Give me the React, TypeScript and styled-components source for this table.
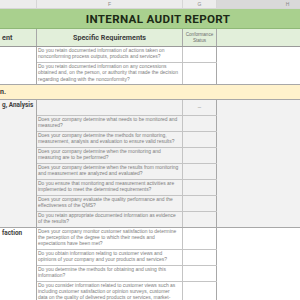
import React from "react";
import styled, { createGlobalStyle } from "styled-components";

type Tone = "white" | "grey" | "yellow";

type Question = {
	text: string;
	status?: string;
};

type SheetSection = {
	title: string;
	tone: Tone;
	questions: Question[];
};

const TONES: Record<Tone, string> = {
	white: "#ffffff",
	grey: "#f2f2f2",
	yellow: "#fff2cc",
};

const COLS = "37px 146px 34px 142px";

const GlobalStyle = createGlobalStyle`
	html, body {
		margin: 0;
		padding: 0;
		background: #ffffff;
		overflow: hidden;
	}
	body {
		width: 300px;
		height: 300px;
	}
`;

// Sections as they show in the scrolled sheet window
const topSection: SheetSection = {
	title: "",
	tone: "white",
	questions: [
		{
			text: "Do you retain documented information of actions taken on nonconforming process outputs, products and services?",
		},
		{
			text: "Do you retain documented information on any concessions obtained and, on the person, or authority that made the decision regarding dealing with the nonconformity?",
		},
	],
};

const monitoringSection: SheetSection = {
	title: "g, Analysis",
	tone: "grey",
	questions: [
		{ text: "", status: "–" },
		{ text: "Does your company determine what needs to be monitored and measured?" },
		{
			text: "Does your company determine the methods for monitoring, measurement, analysis and evaluation to ensure valid results?",
		},
		{ text: "Does your company determine when the monitoring and measuring are to be performed?" },
		{
			text: "Does your company determine when the results from monitoring and measurement are analyzed and evaluated?",
		},
		{
			text: "Do you ensure that monitoring and measurement activities are implemented to meet the determined requirements?",
		},
		{
			text: "Does your company evaluate the quality performance and the effectiveness of the QMS?",
		},
		{ text: "Do you retain appropriate documented information as evidence of the results?" },
	],
};

const customerSection: SheetSection = {
	title: "faction",
	tone: "white",
	questions: [
		{
			text: "Does your company monitor customer satisfaction to determine the perception of the degree to which their needs and expectations have been met?",
		},
		{
			text: "Do you obtain information relating to customer views and opinions of your company and your products and services?",
		},
		{
			text: "Do you determine the methods for obtaining and using this information?",
		},
		{
			text: "Do you consider information related to customer views such as including customer satisfaction or opinion surveys, customer data on the quality of delivered products or services, market-share analysis, warranty claims, dealer reports and compliments?",
		},
	],
};

function Section({ section }: { section: SheetSection }) {
	return (
		<StyledSection $tone={section.tone}>
			<SectionTitle>{section.title}</SectionTitle>
			<Questions>
				{section.questions.map((q, i) => (
					<QuestionRow key={i} $last={i === section.questions.length - 1}>
						<QuestionText>{q.text}</QuestionText>
						<StatusCell>{q.status}</StatusCell>
					</QuestionRow>
				))}
			</Questions>
			<NotesCell />
		</StyledSection>
	);
}

function App() {
	return (
		<>
			<GlobalStyle />
			<Viewport>
				<Sheet>
					<ColumnBar>
						<ColumnLetter></ColumnLetter>
						<ColumnLetter>F</ColumnLetter>
						<ColumnLetter>G</ColumnLetter>
						<ColumnLetter $active>H</ColumnLetter>
					</ColumnBar>

					<TitleBar>
						<TitleText>INTERNAL AUDIT REPORT</TitleText>
					</TitleBar>

					<HeaderRow>
						<HeaderCell $align="left">ent</HeaderCell>
						<HeaderCell $align="center">Specific Requirements</HeaderCell>
						<SmallHeaderCell>
							Conformance
							<br />
							Status
						</SmallHeaderCell>
						<HeaderCell $align="center" />
					</HeaderRow>

					<Section section={topSection} />

					<BandRow>
						<BandText>n.</BandText>
					</BandRow>

					<Section section={monitoringSection} />
					<Section section={customerSection} />
				</Sheet>
			</Viewport>
		</>
	);
}

const Viewport = styled.div`
	width: 300px;
	height: 300px;
	overflow: hidden;
`;

const Sheet = styled.div`
	width: 359px;
	font-family: "Liberation Sans", Arial, sans-serif;
	background: #ffffff;
`;

const ColumnBar = styled.div`
	display: grid;
	grid-template-columns: ${COLS};
	height: 9px;
	background: #ececec;
	border-bottom: 1px solid #d6d6d6;
	box-sizing: border-box;
`;

const ColumnLetter = styled.div<{ $active?: boolean }>`
	display: flex;
	align-items: center;
	justify-content: center;
	font-size: 5px;
	color: #8a8a8a;
	background: ${({ $active }) => ($active ? "#d9d9d9" : "transparent")};
	border-right: 1px solid #d6d6d6;
`;

const TitleBar = styled.div`
	display: flex;
	align-items: center;
	justify-content: center;
	height: 20px;
	padding-right: 43px;
	background: #a9d08e;
	border-bottom: 1px solid #8fb877;
	box-sizing: border-box;
`;

const TitleText = styled.h1`
	margin: 0;
	font-family: Roboto, "DejaVu Sans", sans-serif;
	font-size: 11.6px;
	font-weight: 700;
	letter-spacing: 0.35px;
	color: #1c2a16;
	white-space: nowrap;
`;

const HeaderRow = styled.div`
	display: grid;
	grid-template-columns: ${COLS};
	height: 18px;
	background: #e2efda;
	border-bottom: 1px solid #9a9a9a;
	box-sizing: border-box;
`;

const HeaderCell = styled.div<{ $align: "left" | "center" }>`
	display: flex;
	align-items: center;
	justify-content: ${({ $align }) => ($align === "left" ? "flex-start" : "center")};
	padding-left: ${({ $align }) => ($align === "left" ? "2px" : "0")};
	font-family: Roboto, "DejaVu Sans", sans-serif;
	font-size: 7.2px;
	font-weight: 700;
	color: #3d3d3d;
	border-right: 1px solid #a8a8a8;
	white-space: nowrap;
`;

const SmallHeaderCell = styled.div`
	display: flex;
	align-items: center;
	justify-content: center;
	text-align: center;
	font-size: 4.6px;
	line-height: 6px;
	color: #6e6e6e;
	border-right: 1px solid #a8a8a8;
`;

const StyledSection = styled.div<{ $tone: Tone }>`
	display: flex;
	background: ${({ $tone }) => TONES[$tone]};
	border-bottom: 1px solid #a8a8a8;
`;

const SectionTitle = styled.div`
	width: 37px;
	flex: none;
	box-sizing: border-box;
	padding: 1px 0 0 2px;
	font-family: Roboto, "DejaVu Sans", sans-serif;
	font-size: 6.4px;
	font-weight: 700;
	color: #404040;
	white-space: nowrap;
	overflow: hidden;
	border-right: 1px solid #a8a8a8;
`;

const Questions = styled.div`
	display: flex;
	flex-direction: column;
	width: 180px;
	flex: none;
`;

const QuestionRow = styled.div<{ $last?: boolean }>`
	display: grid;
	grid-template-columns: 146px 34px;
	min-height: 15px;
	border-bottom: ${({ $last }) => ($last ? "none" : "1px solid #c4c4c4")};
`;

const QuestionText = styled.div`
	padding: 1px 2px 1px 1px;
	font-size: 4.95px;
	line-height: 6.3px;
	color: #7d7d7d;
	border-right: 1px solid #c4c4c4;
`;

const StatusCell = styled.div`
	display: flex;
	align-items: center;
	justify-content: center;
	font-size: 6px;
	color: #8a8a8a;
	border-right: 1px solid #a8a8a8;
`;

const NotesCell = styled.div`
	flex: 1;
`;

const BandRow = styled.div`
	display: flex;
	align-items: center;
	height: 15px;
	background: ${TONES.yellow};
	border-bottom: 1px solid #a8a8a8;
	box-sizing: border-box;
`;

const BandText = styled.span`
	font-family: Roboto, "DejaVu Sans", sans-serif;
	font-size: 7px;
	font-weight: 700;
	color: #333333;
`;

export default App;
